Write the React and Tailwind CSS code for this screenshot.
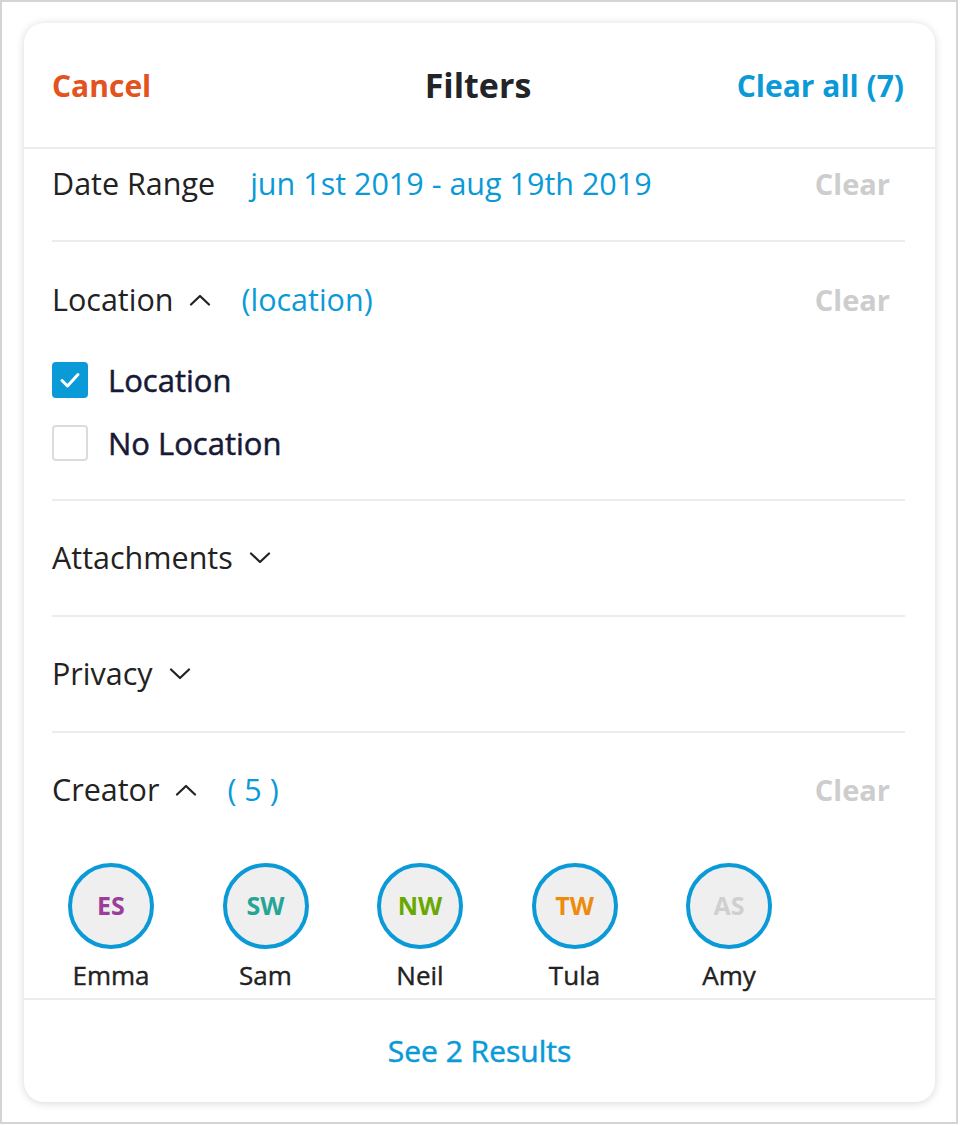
import React from 'react';

const font = { fontFamily: '"Open Sans", "Noto Sans", sans-serif' };

const Chevron = ({ up }) => (
  <svg width="22" height="12" viewBox="0 0 22 12" fill="none">
    <path
      d={up ? 'M2 10.5 L11 2 L20 10.5' : 'M2 1.5 L11 10 L20 1.5'}
      stroke="#222"
      strokeWidth="2.2"
      strokeLinecap="round"
      strokeLinejoin="round"
    />
  </svg>
);

const ClearBtn = () => (
  <span className="ml-auto pr-[15px] text-[29px] font-bold text-[#cdcdcd]">Clear</span>
);

const creators = [
  { initials: 'ES', name: 'Emma', color: 'text-[#9a3e9a]' },
  { initials: 'SW', name: 'Sam', color: 'text-[#24a595]' },
  { initials: 'NW', name: 'Neil', color: 'text-[#69a800]' },
  { initials: 'TW', name: 'Tula', color: 'text-[#ee8a0c]' },
  { initials: 'AS', name: 'Amy', color: 'text-[#cfcfcf]' },
];

const App = () => {
  return (
    <div style={font} className="w-[958px] h-[1124px] border-2 border-[#d4d4d4] bg-white pt-[21px] pl-[22px]">
      <div className="w-[911px] h-[1079px] rounded-[20px] bg-white shadow-[0_1px_8px_rgba(0,0,0,0.16)] flex flex-col overflow-hidden">
        {/* Header */}
        <div className="h-[126px] flex items-center px-[28px] pr-[31px] pt-[1px] border-b-2 border-[#ececec]">
          <span className="w-[200px] text-[30px] font-bold text-[#e2531e]">Cancel</span>
          <span className="flex-1 text-center text-[34px] font-bold text-[#222427]">Filters</span>
          <span className="w-[200px] text-right text-[30px] font-bold text-[#0a9ad7] whitespace-nowrap">Clear all (7)</span>
        </div>

        <div className="flex-1 flex flex-col pl-[28px] pr-[30px]">
          {/* Date range */}
          <div className="pt-[13px] pb-[34px] border-b-2 border-[#ececec]">
            <div className="h-[44px] flex items-center">
              <span className="text-[30.5px] text-[#222]">Date Range</span>
              <span className="ml-[35px] text-[30.5px] text-[#0a9ad7]">jun 1st 2019 - aug 19th 2019</span>
              <ClearBtn />
            </div>
          </div>

          {/* Location */}
          <div className="pt-[36px] pb-[38px] border-b-2 border-[#ececec]">
            <div className="h-[44px] flex items-center">
              <span className="text-[30.5px] text-[#222]">Location</span>
              <span className="ml-[16px]"><Chevron up /></span>
              <span className="ml-[30px] text-[30.5px] text-[#0a9ad7]">(location)</span>
              <ClearBtn />
            </div>
            <div className="mt-[40px] flex flex-col gap-[27px]">
              <div className="h-[36px] flex items-center">
                <span className="w-[36px] h-[36px] rounded-[4px] bg-[#0a9ad7] flex items-center justify-center">
                  <svg width="22" height="18" viewBox="0 0 22 18" fill="none">
                    <path d="M3 9.5 L8.5 15 L19 3.5" stroke="#fff" strokeWidth="3" strokeLinecap="round" strokeLinejoin="round" />
                  </svg>
                </span>
                <span className="ml-[20px] text-[31px] text-[#161a36] [-webkit-text-stroke:0.5px]">Location</span>
              </div>
              <div className="h-[36px] flex items-center">
                <span className="w-[36px] h-[36px] rounded-[4px] border-2 border-[#dcdcdc] bg-white" />
                <span className="ml-[20px] text-[31px] text-[#161a36] [-webkit-text-stroke:0.5px]">No Location</span>
              </div>
            </div>
          </div>

          {/* Attachments */}
          <div className="pt-[35px] pb-[35px] border-b-2 border-[#ececec]">
            <div className="h-[44px] flex items-center">
              <span className="text-[30.5px] text-[#222]">Attachments</span>
              <span className="ml-[16px]"><Chevron /></span>
            </div>
          </div>

          {/* Privacy */}
          <div className="pt-[35px] pb-[35px] border-b-2 border-[#ececec]">
            <div className="h-[44px] flex items-center">
              <span className="text-[30.5px] text-[#222]">Privacy</span>
              <span className="ml-[16px]"><Chevron /></span>
            </div>
          </div>

          {/* Creator */}
          <div className="pt-[35px] pb-[5px]">
            <div className="h-[44px] flex items-center">
              <span className="text-[30.5px] text-[#222]">Creator</span>
              <span className="ml-[16px]"><Chevron up /></span>
              <span className="ml-[30px] text-[30.5px] text-[#0a9ad7]">( 5 )</span>
              <ClearBtn />
            </div>
            <div className="mt-[51px] flex gap-[36.5px]">
              {creators.map((c) => (
                <div key={c.name} className="w-[118px] flex flex-col items-center">
                  <div className="w-[86px] h-[86px] rounded-full border-4 border-[#0a9ad7] bg-[#efefef] flex items-center justify-center">
                    <span className={`text-[25px] font-bold ${c.color}`}>{c.initials}</span>
                  </div>
                  <span className="mt-[10px] h-[32px] leading-[32px] text-[26px] text-[#222] [-webkit-text-stroke:0.4px]">{c.name}</span>
                </div>
              ))}
            </div>
          </div>
        </div>

        {/* Footer */}
        <div className="h-[104px] border-t-2 border-[#ececec] flex items-center justify-center pb-[2px]">
          <span className="text-[30px] text-[#0a9ad7] [-webkit-text-stroke:0.5px]">See 2 Results</span>
        </div>
      </div>
    </div>
  );
};

export default App;
